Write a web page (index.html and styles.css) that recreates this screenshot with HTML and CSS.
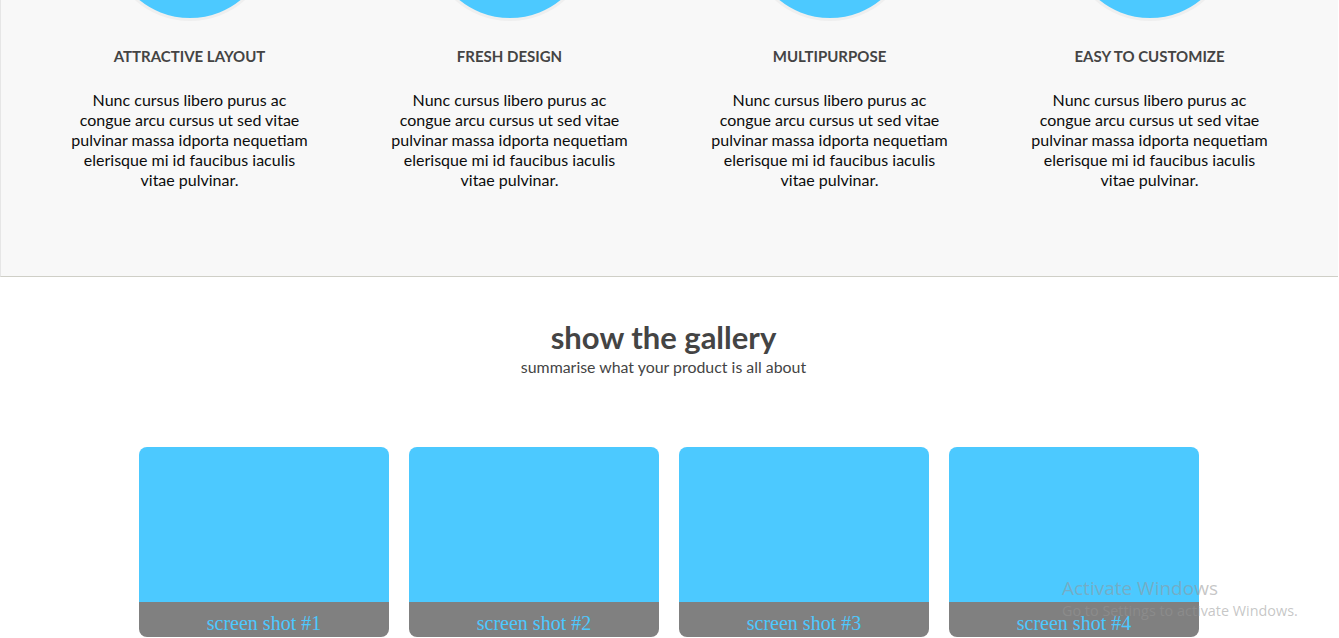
FILE: index.html
```html
<!DOCTYPE html>
<html>
<head>
<meta charset="utf-8">
<link rel="stylesheet" href="styles.css">
</head>
<body>
<section class="features">
  <div class="feature-row">
    <div class="feature">
      <div class="circle"></div>
      <h3>ATTRACTIVE LAYOUT</h3>
      <p>Nunc cursus libero purus ac congue arcu cursus ut sed vitae pulvinar massa idporta nequetiam elerisque mi id faucibus iaculis vitae pulvinar.</p>
    </div>
    <div class="feature">
      <div class="circle"></div>
      <h3>FRESH DESIGN</h3>
      <p>Nunc cursus libero purus ac congue arcu cursus ut sed vitae pulvinar massa idporta nequetiam elerisque mi id faucibus iaculis vitae pulvinar.</p>
    </div>
    <div class="feature">
      <div class="circle"></div>
      <h3>MULTIPURPOSE</h3>
      <p>Nunc cursus libero purus ac congue arcu cursus ut sed vitae pulvinar massa idporta nequetiam elerisque mi id faucibus iaculis vitae pulvinar.</p>
    </div>
    <div class="feature">
      <div class="circle"></div>
      <h3>EASY TO CUSTOMIZE</h3>
      <p>Nunc cursus libero purus ac congue arcu cursus ut sed vitae pulvinar massa idporta nequetiam elerisque mi id faucibus iaculis vitae pulvinar.</p>
    </div>
  </div>
</section>
<section class="gallery">
  <div class="gallery-head">
    <h2>show the gallery</h2>
    <p class="sub">summarise what your product is all about</p>
  </div>
  <div class="cards">
    <div class="card"><div class="shot"></div><div class="label">screen shot #1</div></div>
    <div class="card"><div class="shot"></div><div class="label">screen shot #2</div></div>
    <div class="card"><div class="shot"></div><div class="label">screen shot #3</div></div>
    <div class="card"><div class="shot"></div><div class="label">screen shot #4</div></div>
  </div>
</section>
<div class="watermark">
  <div class="wm-title">Activate Windows</div>
  <div class="wm-sub">Go to Settings to activate Windows.</div>
</div>
</body>
</html>
```
FILE: styles.css
```css
html, body {
  margin: 0;
  padding: 0;
  overflow: hidden;
  background: #fff;
}
body {
  font-family: Lato, "Liberation Sans", sans-serif;
  width: 1339px;
  height: 638px;
}
.features {
  width: 1338px;
  background: #f8f8f8;
  border-left: 1px solid #e6e6e6;
  border-bottom: 1px solid #cfcfc7;
  box-sizing: border-box;
  height: 277px;
  overflow: hidden;
}
.feature-row {
  width: 1280px;
  margin: 0 auto;
  display: flex;
}
.feature {
  width: 320px;
  display: flex;
  flex-direction: column;
  align-items: center;
}
.circle {
  width: 160px;
  height: 160px;
  border-radius: 50%;
  background: #4cc9ff;
  border: 3px solid #efefef;
  margin-top: -145px;
  flex: none;
}
.feature h3 {
  margin: 25px 0 0;
  font-size: 15px;
  line-height: 20px;
  font-weight: 700;
  color: #444;
}
.feature p {
  margin: 24px 0 0;
  width: 244px;
  text-align: center;
  font-size: 16px;
  line-height: 20px;
  color: #0c0c0c;
}
.gallery {
  width: 1338px;
  text-align: center;
}
.gallery-head {
  padding-right: 11px;
}
.gallery h2 {
  margin: 42px 0 0;
  font-size: 31px;
  line-height: 36px;
  font-weight: 700;
  color: #444;
}
.gallery .sub {
  margin: 2px 0 0;
  font-size: 15.9px;
  line-height: 20px;
  color: #444;
}
.cards {
  display: flex;
  justify-content: center;
  gap: 20px;
  margin-top: 70px;
}
.card {
  width: 250px;
  height: 190px;
  border-radius: 8px;
  overflow: hidden;
  display: flex;
  flex-direction: column;
}
.shot {
  height: 155px;
  background: #4cc9ff;
}
.label {
  height: 35px;
  background: #808080;
  color: #4cc9ff;
  font-family: "Liberation Serif", serif;
  font-size: 20px;
  line-height: 42px;
}
.watermark {
  position: absolute;
  left: 1062px;
  top: 576px;
  color: rgba(150,150,150,0.55);
  font-family: "Open Sans", "Liberation Sans", sans-serif;
  pointer-events: none;
}
.wm-title {
  font-size: 19px;
  line-height: 24px;
}
.wm-sub {
  font-size: 14.4px;
  line-height: 18px;
  margin-top: 2px;
}
```
